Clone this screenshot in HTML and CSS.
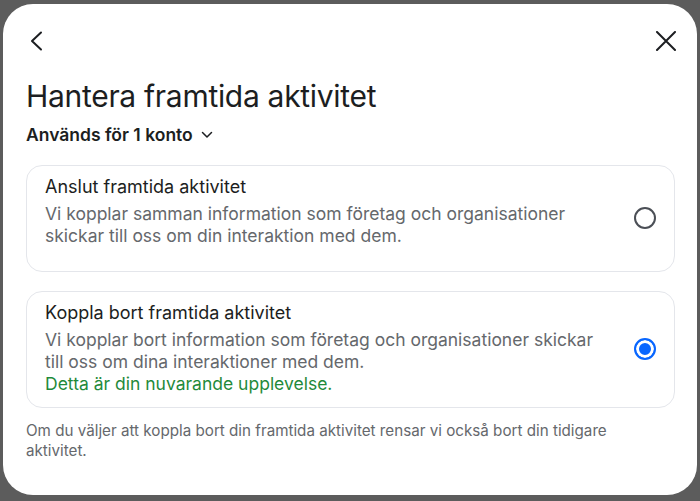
FILE: index.html
```html
<!DOCTYPE html>
<html lang="sv">
<head>
  <meta charset="UTF-8" />
  <meta name="viewport" content="width=device-width, initial-scale=1.0"/>
  <title>Hantera framtida aktivitet</title>
  <link rel="stylesheet" href="styles.css">
</head>
<body>

<div class="dialog">
  <div class="dialog-top">
    <button class="icon-btn back" aria-label="Tillbaka">
      <svg width="16" height="20" viewBox="0 0 16 20"><path d="M13 1.5 L4 10 L13 18.5" fill="none" stroke="#1c1e21" stroke-width="2" stroke-linecap="round" stroke-linejoin="round"/></svg>
    </button>
    <button class="icon-btn close" aria-label="Stäng">
      <svg width="22" height="20" viewBox="0 0 22 20"><path d="M2 1 L20 19 M20 1 L2 19" fill="none" stroke="#1c1e21" stroke-width="2" stroke-linecap="round"/></svg>
    </button>
  </div>

  <h1 class="title">Hantera framtida aktivitet</h1>

  <div class="accounts">
    Används för 1 konto
    <svg width="12" height="8" viewBox="0 0 12 8"><path d="M1.5 1.5 L6 6 L10.5 1.5" fill="none" stroke="#1c1e21" stroke-width="1.5" stroke-linecap="round" stroke-linejoin="round"/></svg>
  </div>

  <div class="option option-short">
    <div class="option-text">
      <div class="option-title">Anslut framtida aktivitet</div>
      <div class="option-desc">Vi kopplar samman information som företag och organisationer skickar till oss om din interaktion med dem.</div>
    </div>
    <span class="radio"></span>
  </div>

  <div class="option">
    <div class="option-text">
      <div class="option-title">Koppla bort framtida aktivitet</div>
      <div class="option-desc">Vi kopplar bort information som företag och organisationer skickar till oss om dina interaktioner med dem.</div>
      <div class="option-current">Detta är din nuvarande upplevelse.</div>
    </div>
    <span class="radio checked"></span>
  </div>

  <p class="footnote">Om du väljer att koppla bort din framtida aktivitet rensar vi också bort din tidigare aktivitet.</p>
</div>

</body>
</html>
```

FILE: styles.css
```css
html, body {
  margin: 0;
  height: 100%;
}

body {
  background: #5c5c5c;
  font-family: Inter, "Noto Sans", sans-serif;
  color: #1c1e21;
  padding: 4px 3px 6px 3px;
  box-sizing: border-box;
}

.dialog {
  background: #fff;
  border-radius: 30px;
  height: 100%;
  padding: 0 22px 0 23px;
  box-sizing: border-box;
}

.dialog-top {
  display: flex;
  justify-content: space-between;
  align-items: center;
  padding-top: 23px;
  height: 28px;
}

.icon-btn {
  background: none;
  border: none;
  padding: 0;
  display: flex;
}

.icon-btn.back {
  margin-left: 2px;
}

.icon-btn.close {
  margin-right: -2px;
}

.title {
  font-size: 30px;
  font-weight: 400;
  letter-spacing: -0.3px;
  margin: 23px 0 0 0;
  line-height: 36px;
}

.accounts {
  display: flex;
  align-items: center;
  gap: 8px;
  font-size: 17.5px;
  font-weight: 600;
  margin-top: 10px;
  line-height: 22px;
}

.option {
  display: flex;
  align-items: center;
  border: 1px solid #e4e6eb;
  border-radius: 16px;
  padding: 10px 18px 12px 18px;
  margin-top: 19px;
}

.option-short .option-text {
  padding-bottom: 12px;
}

.option-text {
  flex: 1;
  padding-right: 20px;
}

.option-title {
  font-size: 18px;
  line-height: 22px;
  margin-bottom: 5px;
}

.option-desc,
.option-current {
  font-size: 17.5px;
  line-height: 22px;
  color: #65686c;
}

.option-current {
  color: #1f8a3b;
}

.radio {
  width: 22px;
  height: 22px;
  border: 2px solid #4b4f56;
  border-radius: 50%;
  box-sizing: border-box;
  flex-shrink: 0;
}

.radio.checked {
  border-color: #0866ff;
  background: #0866ff;
  box-shadow: inset 0 0 0 3px #fff;
}

.footnote {
  font-size: 15.2px;
  line-height: 20px;
  color: #65686c;
  margin: 13px 0 0 0;
  padding-right: 50px;
}
```
